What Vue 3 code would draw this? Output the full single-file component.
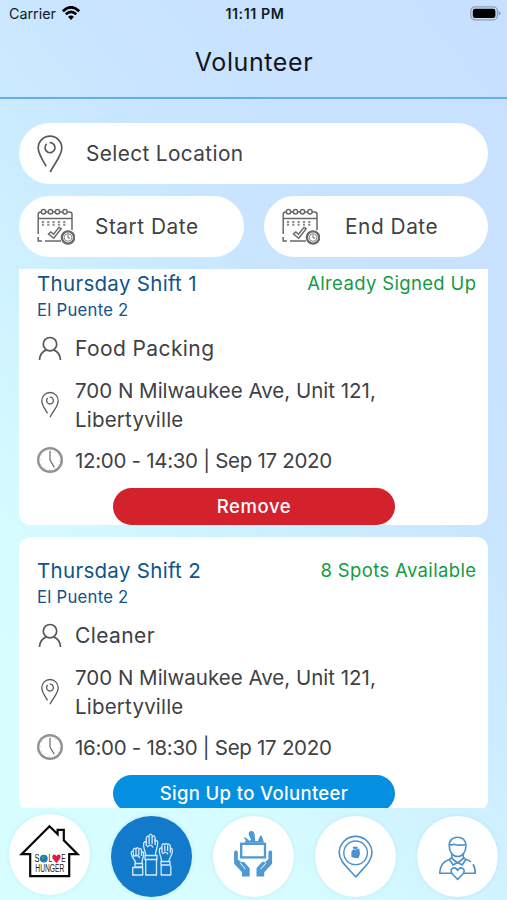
<script setup>
import { ref } from 'vue';

const activeTab = ref('volunteer');

const shifts = ref([
  {
    id: 1,
    title: 'Thursday Shift 1',
    site: 'El Puente 2',
    status: 'Already Signed Up',
    role: 'Food Packing',
    street: '700 N Milwaukee Ave, Unit 121,',
    city: 'Libertyville',
    time: '12:00 - 14:30 | Sep 17 2020',
    signedUp: true
  },
  {
    id: 2,
    title: 'Thursday Shift 2',
    site: 'El Puente 2',
    status: '8 Spots Available',
    role: 'Cleaner',
    street: '700 N Milwaukee Ave, Unit 121,',
    city: 'Libertyville',
    time: '16:00 - 18:30 | Sep 17 2020',
    signedUp: false
  }
]);

const dates = ['Start Date', 'End Date'];
const tabs = ['home', 'volunteer', 'donate', 'location', 'profile'];
</script>

<template>
  <div class="screen">
    <div class="status-bar">
      <div class="carrier">
        <span>Carrier</span>
        <svg width="20" height="15" viewBox="0 0 20 15">
          <path d="M1.8 5.2 Q10 -2.6 18.2 5.2" fill="none" stroke="#000" stroke-width="2.8" />
          <path d="M4.8 8.3 Q10 3.5 15.2 8.3" fill="none" stroke="#000" stroke-width="2.6" />
          <path d="M7 10.8 Q10 8.2 13 10.8 L10 14z" fill="#000" />
        </svg>
      </div>
      <span class="clock">11:11 PM</span>
      <svg class="battery" width="31" height="15" viewBox="0 0 31 15">
        <rect x="0.8" y="0.9" width="26.6" height="12.9" rx="4" fill="none" stroke="#8d9db1" stroke-width="1.2" />
        <rect x="2.8" y="2.8" width="22.6" height="9.1" rx="2.2" fill="#000" />
        <path d="M28.6 5.2 Q30.6 5.8 30.6 7.3 Q30.6 8.8 28.6 9.6z" fill="#8d9db1" />
      </svg>
    </div>
    <header class="header"><h1>Volunteer</h1></header>

    <div class="filters">
      <button class="pill pill-location">
        <svg width="26" height="38" viewBox="0 0 26 38" class="line-icon">
          <path d="M9.2 31.3 C5.5 25 1.2 18.5 1.2 13 A11.8 11.8 0 0 1 24.8 13 C24.8 20.5 18 27.5 13.2 37" />
          <path d="M12.6 7.6 A5 5 0 1 1 9.6 8.9" />
        </svg>
        <span>Select Location</span>
      </button>
      <div class="date-row">
        <button v-for="(label, i) in dates" :key="label" class="pill pill-date" :class="{ end: i === 1 }">
          <svg width="38" height="37" viewBox="0 0 38 37" class="calendar-icon">
            <path d="M5 4 H3.5 Q1.2 4 1.2 6.5 V26 M1.2 29 V33 H5 M8 33 H24 M35 22 V6.5 Q35 4 32.5 4 H30.5 M8.7 4 H11.3 M15.7 4 H18.3 M22.7 4 H25.8 M1.2 10.5 H35" />
            <circle v-for="x in [6.5, 13.5, 20.5, 28]" :key="x" :cx="x" cy="3.8" r="2.2" />
            <path d="M6 13 V18 M11.3 13 V18 M16.6 13 V18 M22 13 V18 M27.3 13 V18" stroke="#8a8b8d" stroke-width="2.2" stroke-dasharray="2 0.8" />
            <path d="M11.5 26 L13.8 24 L16.5 26.3 L22 19.4 L24.2 20.8 L16.7 30.3z" />
            <circle cx="31" cy="29.5" r="6.1" fill="#fff" stroke-width="2.4" />
            <circle cx="31" cy="29.5" r="3.8" stroke-width="0.8" />
            <path d="M31 26.4 V30 H33" stroke-width="1" />
          </svg>
          <span>{{ label }}</span>
        </button>
      </div>
    </div>

    <main class="shift-list">
      <article v-for="shift in shifts" :key="shift.id" class="card">
        <div class="card-top">
          <h2>{{ shift.title }}</h2>
          <span class="spots">{{ shift.status }}</span>
        </div>
        <div class="site">{{ shift.site }}</div>
        <div class="row role">
          <svg width="26" height="26" viewBox="0 0 26 26" class="line-icon">
            <circle cx="13" cy="8.2" r="6.7" />
            <path d="M2.5 24 C2.8 18.2 6.5 15 9.4 13.9 M16.6 13.9 C19.5 15 23.2 18.2 23.5 24" />
          </svg>
          <span>{{ shift.role }}</span>
        </div>
        <div class="row address">
          <svg width="26" height="28" viewBox="0 0 26 28" class="line-icon thin">
            <path d="M10.5 22.3 C8 18 4.8 14.2 4.8 9.7 A8.2 8.2 0 0 1 21.2 9.7 C21.2 15.5 16.5 19 13 26.3" />
            <path d="M12.8 6.2 A3.4 3.4 0 1 1 10.7 7.1" />
          </svg>
          <div>
            <div class="street">{{ shift.street }}</div>
            <div class="city">{{ shift.city }}</div>
          </div>
        </div>
        <div class="row time">
          <svg width="26" height="26" viewBox="0 0 26 26">
            <circle cx="13" cy="13" r="11.8" fill="none" stroke="#929292" stroke-width="2.4" />
            <circle cx="13" cy="13" r="9.4" fill="none" stroke="#aaa" stroke-width="0.8" stroke-dasharray="0.8 4.12" />
            <path d="M13 4 V13 L17.2 20.2" fill="none" stroke="#777" stroke-width="1.3" />
          </svg>
          <span>{{ shift.time }}</span>
        </div>
        <button class="action" :class="shift.signedUp ? 'remove' : 'sign-up'">
          {{ shift.signedUp ? 'Remove' : 'Sign Up to Volunteer' }}
        </button>
      </article>
    </main>

    <nav class="tab-bar">
      <button v-for="tab in tabs" :key="tab" class="tab" :class="[tab, { active: activeTab === tab }]" @click="activeTab = tab">
        <svg v-if="tab === 'home'" width="81" height="81" viewBox="0 0 81 81">
          <path d="M21.2 40.2 H12.6 L40.5 12.2 L48.6 20.2 V15.8 H54.8 V26.3 L68.6 40.2 H60.2 V62.2 H21.2z" fill="#fff" stroke="#080808" stroke-width="2.2" />
          <text x="25.4" y="48" class="logo-text" font-size="10" textLength="5" lengthAdjust="spacingAndGlyphs">S</text>
          <circle cx="34.8" cy="44.6" r="3.9" fill="#1976d2" />
          <path d="M32.2 42 L35.2 41.5 L36.2 44 L33.7 46z M36.7 45.5 L37.9 44.5 L37 47.5z" fill="#35a052" />
          <text x="39.4" y="48" class="logo-text" font-size="10" textLength="3.6" lengthAdjust="spacingAndGlyphs">L</text>
          <path d="M47.4 49.2 L43.6 44.5 Q42.6 41 45 40.4 Q46.8 40.4 47.4 42.2 Q48.3 40.2 50.2 40.5 Q52.2 41.3 51.2 44.5z" fill="#e31b3e" />
          <text x="52.2" y="48" class="logo-text" font-size="10" textLength="4.4" lengthAdjust="spacingAndGlyphs">E</text>
          <text x="26.3" y="58.4" class="logo-text" font-size="10" textLength="29" lengthAdjust="spacingAndGlyphs">HUNGER</text>
        </svg>
        <svg v-else-if="tab === 'volunteer'" width="81" height="81" viewBox="0 0 81 81" class="hands-icon">
          <path d="M34.7 39.5 C34.7 34.5 31.5 32 32.7 27 Q34 24.6 35.3 26.8 V21.5 Q36.7 18.8 38.1 21.5 V19.5 Q39.6 16.8 41.1 19.5 V21 Q42.7 18.5 44.1 21.5 V25.5 Q45.7 23.5 46.7 26 C46.9 32 44 35 44.5 39.5" />
          <path d="M35.3 27 V30 M38.1 22 V28 M41.1 21 V28 M44.1 23 V29 M36 31 Q40 27 42 31.5" />
          <path d="M34 39.5 H46 V43.5 H34z M34.7 44 V59 H45.5 V44" />
          <path d="M24.6 47.5 C24.4 43 20.5 42 20.3 37.5 Q20.3 34.5 22.3 36 V33.5 Q23.8 31 25 33.5 Q26.3 29.8 27.8 33.3 Q29.5 31.5 30.5 34 V37 Q33.3 34.2 32.5 39 C32.4 43 30.3 44 31.2 47.5 M25 34 V39 M27.8 34 V39 M30.5 36 V40 M22.5 37 V40 L27 39.5 L29 42" />
          <path d="M24 47.5 H31.5 V51 H24z M21.7 51.5 H31.7 V59 H21.7z" />
          <path d="M50.5 45.5 C50.7 40 47.2 38 48.5 33 Q50 31 51 33 V29 Q52.5 26.5 53.8 29 Q55.1 25.7 56.6 29 Q58.2 27 59.3 30 V33 Q61.7 31 61.3 36 C60.5 41 57.8 42 58 45.5 M51 33 V37 M53.8 30 V35 M56.6 30 V35 M59.3 32 V37 M51.5 38 Q55 34 57 38.5" />
          <path d="M50 45.5 H59 V49 H50z M50.2 49.5 V59 H59.8 V49.5" />
        </svg>
        <svg v-else-if="tab === 'donate'" width="81" height="81" viewBox="0 0 81 81">
          <rect x="28.2" y="27.8" width="23.8" height="13.6" fill="none" stroke="#4c99d5" stroke-width="2.3" />
          <path d="M31.5 26.8 L32.8 24.5 L30.5 21 L34 22.5 L36.5 25 L38 23.5 L35.8 19 Q35.2 15 38.4 15 Q41.3 15.2 41.6 19 L42.3 25 H45 L47 20 Q48 18.6 49 20.5 L51 26.8z" fill="#4c99d5" />
          <path d="M21.1 35.5 Q23.5 33.3 24.8 36 V43.3 L28.5 46.4 Q30.2 44.8 32 47 L36.7 52.3 V60.6 H29 V56.3 L21.1 47.8z" fill="#4c99d5" />
          <path d="M59.1 35.5 Q56.7 33.3 55.4 36 V43.3 L51.7 46.4 Q50 44.8 48.2 47 L43.5 52.3 V60.6 H51.2 V56.3 L59.1 47.8z" fill="#4c99d5" />
          <path d="M27 46.8 L32.4 53 M53.2 46.8 L47.8 53" stroke="#fff" stroke-width="1" />
        </svg>
        <svg v-else-if="tab === 'location'" width="81" height="81" viewBox="0 0 81 81" class="blue-line">
          <path d="M40.8 61 C33 51.8 24.2 45.5 24.2 36.8 A16.4 16.4 0 0 1 57 36.8 C57 45.5 48.5 51.8 40.8 61z" />
          <circle cx="40.6" cy="36.8" r="11.8" stroke-width="1.4" />
          <path d="M37.5 30.8 H42.8 L42 32.8 H44.3 L45 38 L43.6 42 H40 L36.4 41 V35.5 L38.5 33z" fill="#4a91ce" stroke="none" />
          <path d="M38.5 33.2 L41.5 33.8" stroke="#fff" stroke-width="0.7" />
        </svg>
        <svg v-else width="81" height="81" viewBox="0 0 81 81" class="blue-line">
          <path d="M32.2 29.3 C32.2 18.5 49 18.5 49 29.3 C49 36 45.4 40.5 40.6 40.5 C35.8 40.5 32.2 36 32.2 29.3z" />
          <path d="M32.3 28.5 Q35.5 29.6 37 28.2 Q41.5 29.8 48.8 28.5" />
          <path d="M34.9 38 V42.5 L40.6 47 L46.3 42.5 V38" />
          <path d="M34.5 41.5 L32.3 43.3 L36 49 L40.6 46.5 L45.2 49 L48.9 43.3 L46.3 41.5" />
          <path d="M32.3 43.5 C26.5 45.3 23 49.5 22.7 57.3 H35.5 M46 57.3 H58.3 Q58.2 51.5 56 48.3 M49 43.5 Q52.4 44.4 54 46" />
          <path d="M40.6 63.5 L34.9 57.5 Q32.8 53.5 36.2 52 Q39.3 51.4 40.6 54.5 Q42 51.4 45 52 Q48.5 53.5 46.3 57.5z" fill="#fff" />
        </svg>
      </button>
    </nav>
  </div>
</template>

<style>
body { margin: 0; }
</style>

<style scoped>
.screen { width: 507px; height: 900px; overflow: hidden; display: flex; flex-direction: column; background: linear-gradient(50deg, #d7feff 0%, #d6fcff 25%, #d0f3ff 40%, #cbebff 53%, #c9e4ff 66%, #c7e0ff 100%); font-family: 'Inter', 'Liberation Sans', sans-serif; color: #404144; }
* { box-sizing: border-box; }
h1, h2 { margin: 0; font-weight: 400; }
button { border: 0; padding: 0; font: inherit; color: inherit; }
svg { display: block; flex-shrink: 0; }

.status-bar { height: 28px; padding: 0 6px 0 9px; display: grid; grid-template-columns: 1fr auto 1fr; align-items: center; color: #111a24; font-size: 14.3px; }
.carrier { display: flex; align-items: center; gap: 5px; }
.carrier svg { margin-top: -2px; }
.carrier span, .clock { margin-top: -1px; }
.clock { font-weight: 600; font-size: 14.2px; letter-spacing: 0.6px; }
.battery { justify-self: end; margin-top: -1px; }
.header { height: 71px; border-bottom: 2px solid #65afe9; display: flex; justify-content: center; padding: 18px 0 0 1px; }
h1 { font-size: 25px; line-height: 32px; letter-spacing: 0.6px; color: #111419; }

.filters { padding: 24px 19px 0; height: 170px; display: flex; flex-direction: column; gap: 12px; }
.pill { height: 61px; border-radius: 31px; background: #fff; display: flex; align-items: center; font-size: 20.8px; letter-spacing: 0.38px; }
.pill-location { padding-left: 18px; gap: 23px; }
.date-row { display: grid; grid-template-columns: 225px 224px; gap: 20px; }
.pill-date { padding-left: 18px; gap: 20px; letter-spacing: 0.55px; }
.pill-date.end { gap: 25px; }
.line-icon { fill: none; stroke: #58595b; stroke-width: 1.7; }
.line-icon.thin { stroke-width: 1.3; }
.calendar-icon { fill: none; stroke: #68696b; stroke-width: 1.5; }

.shift-list { height: 539px; margin: 0 19px; overflow: hidden; }
.card { height: 275px; background: #fff; border-radius: 12px; padding: 19px 12px 0 18px; display: flex; flex-direction: column; }
.card:first-child { margin-top: -19px; margin-bottom: 12px; }
.card-top { display: flex; justify-content: space-between; align-items: center; height: 28px; }
h2 { font-size: 20.5px; letter-spacing: 0.3px; color: #10548b; }
.spots { font-size: 18.5px; letter-spacing: 0.35px; margin-right: -0.4px; color: #129b43; }
.site { height: 26px; line-height: 26px; font-size: 16.7px; letter-spacing: 0.25px; color: #10548b; }
.row { display: flex; align-items: center; gap: 12px; font-size: 20.5px; }
.role { height: 28px; margin-top: 12px; font-size: 21px; letter-spacing: 0.4px; }
.role span { margin-top: -1px; }
.address { height: 58px; margin-top: 13px; line-height: 29px; }
.city { letter-spacing: 0.2px; }
.time { height: 26px; margin-top: 13px; letter-spacing: -0.3px; }
.action { width: 282px; height: 37px; flex-shrink: 0; margin: 15px 0 0 76px; padding-bottom: 2px; border-radius: 19px; color: #fff; font-size: 18.5px; font-weight: 500; letter-spacing: 0.35px; }
.remove { background: #d3222c; letter-spacing: 0.6px; }
.sign-up { background: #058fe0; }

.tab-bar { display: flex; gap: 21px; padding: 8px 9px 0; }
.tab { width: 81px; height: 81px; flex-shrink: 0; border-radius: 50%; background: #fff; box-shadow: 0 0 4px rgba(120, 180, 200, 0.22); }
.tab.home { margin-top: -2px; }
.tab.active { background: #127acb; }
.hands-icon { fill: none; stroke: #d5eaff; stroke-width: 1.3; stroke-linejoin: round; }
.blue-line { fill: none; stroke: #4a91ce; stroke-width: 1.6; stroke-linejoin: round; }
.logo-text { font-family: 'Liberation Sans', sans-serif; font-weight: 400; fill: #222; }
</style>
